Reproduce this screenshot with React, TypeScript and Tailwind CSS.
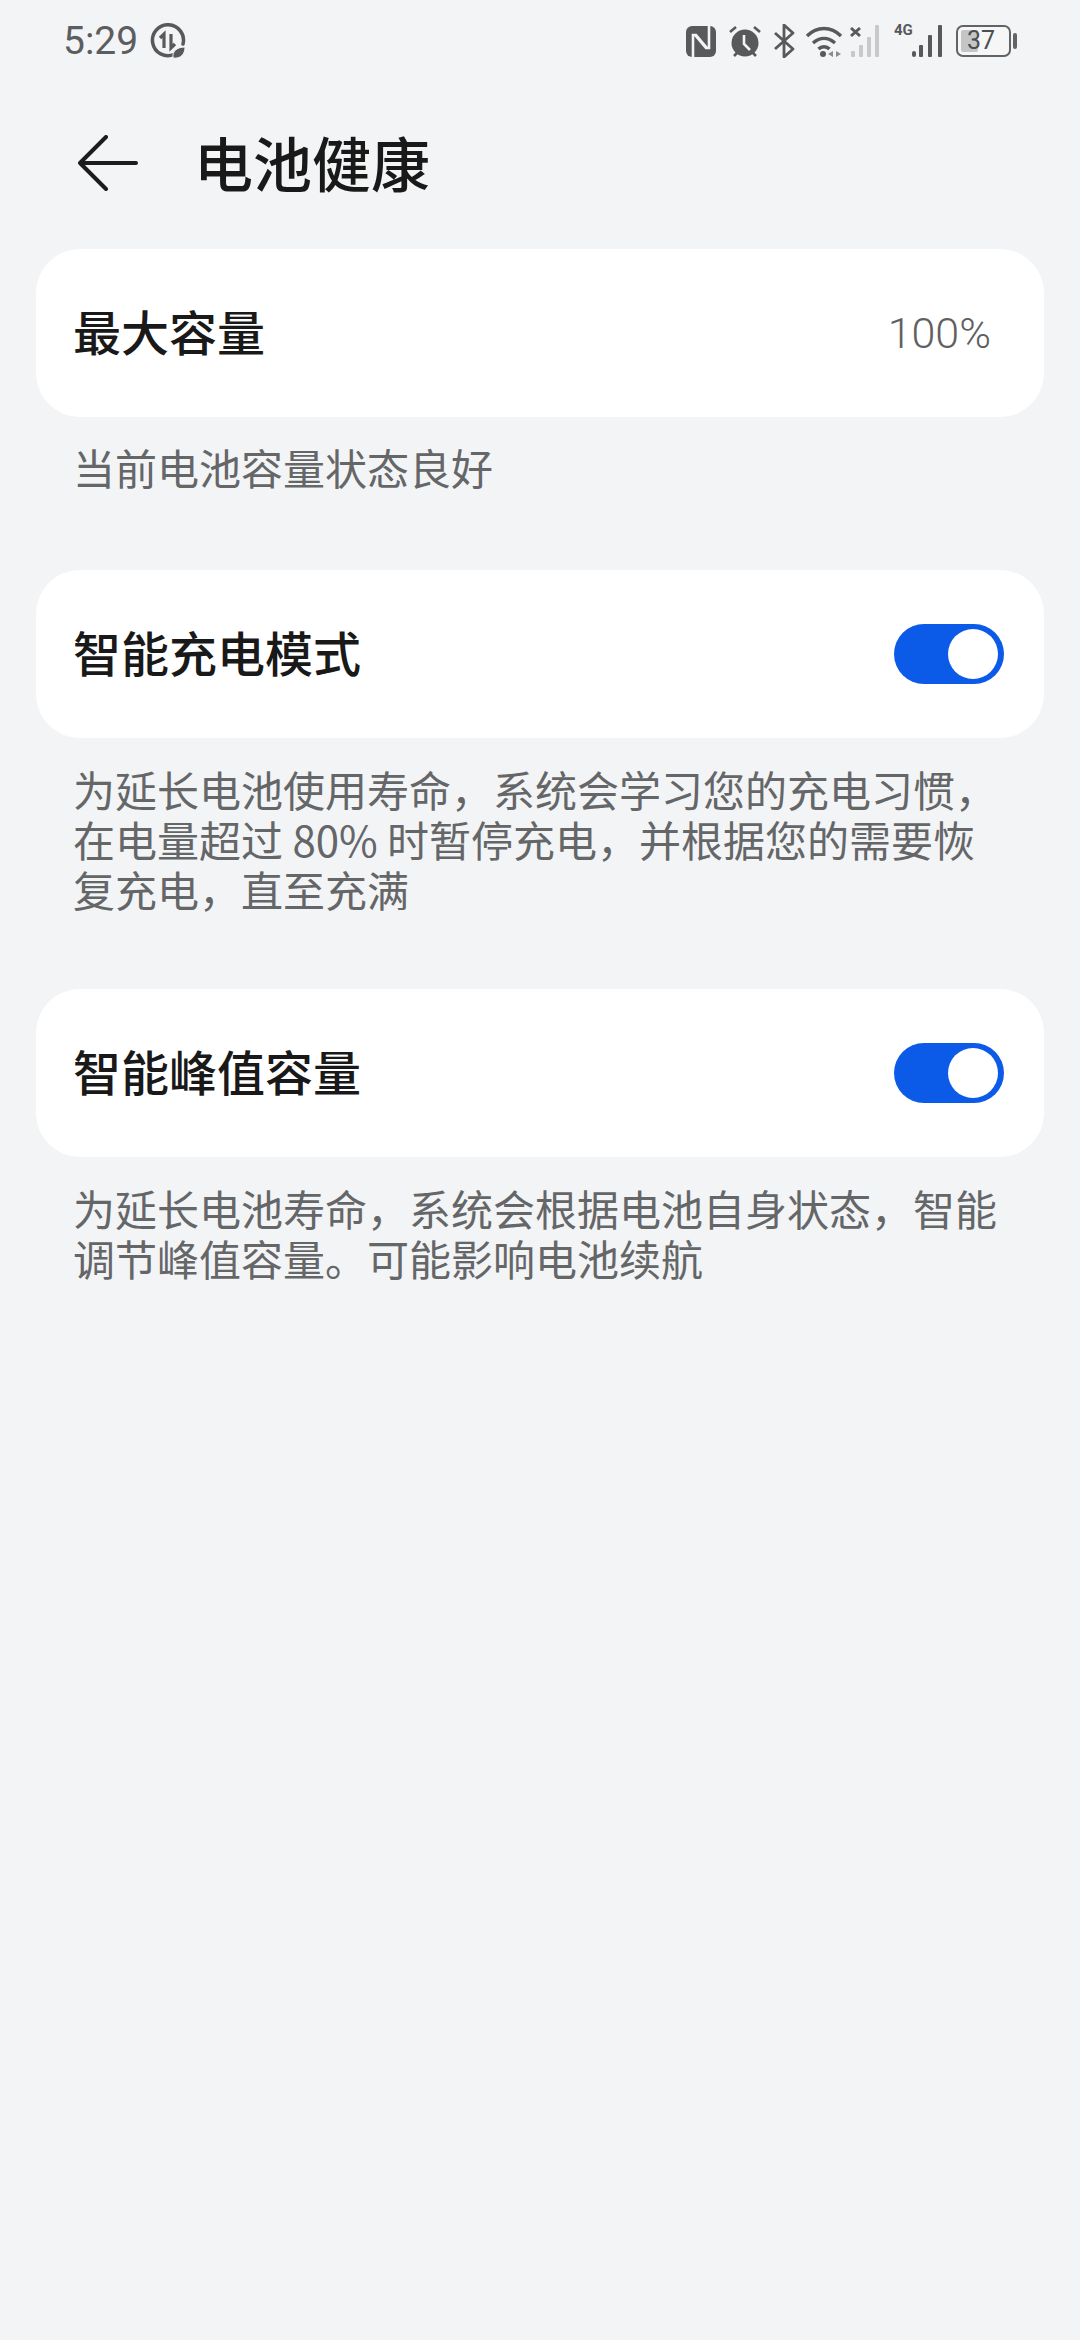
import React from "react";

function Toggle() {
  return (
    <div className="flex h-[60px] w-[110px] items-center justify-end rounded-full bg-[#0c5ae8] pr-[6px]">
      <div className="h-[50px] w-[50px] rounded-full bg-white" />
    </div>
  );
}

function Card({ title, children }: { title: string; children: React.ReactNode }) {
  return (
    <div className="mx-[36px] flex h-[168px] items-center justify-between rounded-[44px] bg-white pl-[37px] pr-[40px]">
      <span className="pb-[7px] text-[48px] font-medium leading-none text-[#191919]">{title}</span>
      {children}
    </div>
  );
}

function Caption({ lines, className }: { lines: string[]; className: string }) {
  return (
    <div className={"ml-[73px] text-[42px] leading-[50px] whitespace-nowrap text-[#646668] " + className}>
      {lines.map((l) => (
        <div key={l}>{l}</div>
      ))}
    </div>
  );
}

function StatusBar() {
  const c = "#58595b";
  return (
    <div className="flex h-[80px] items-center justify-between pl-[63px] pr-[63px] pt-[2px]">
      <div className="flex items-center gap-[12px]">
        <span className="font-['Roboto',sans-serif] text-[39px] leading-none text-[#5c5d5f]">5:29</span>
        <svg width="36" height="36" viewBox="0 0 36 36" fill="none">
          <path d="M24 31.5A15.5 15.5 0 1 1 33 21" stroke={c} strokeWidth="3.5" strokeLinecap="round" />
          <path d="M14 25V11l-4 4M21 11v14l4-4" stroke={c} strokeWidth="3.2" fill="none" />
          <path d="M23 35c-1-6 3-11 12-11 0 7-4 12-12 11z" fill={c} stroke="#f3f4f6" strokeWidth="1" />
        </svg>
      </div>
      <div className="flex items-center">
        <svg width="30" height="31" viewBox="0 0 30 31" fill="none" className="mr-[12px]">
          <rect width="30" height="31" rx="6" fill={c} />
          <path d="M7 31V9h3l11 13M23 0v22h-3L9 9" stroke="#f3f4f6" strokeWidth="2.600" />
        </svg>
        <svg width="34" height="33" viewBox="0 0 34 33" fill="none" className="mr-[11px]">
          <circle cx="17" cy="18" r="13.500" fill={c} />
          <path d="M16 10v9l6 6" stroke="#f3f4f6" strokeWidth="2.6" />
          <path d="M2 7l6-5M32 7l-6-5M6 31l3-3M28 31l-3-3" stroke={c} strokeWidth="2.6" />
        </svg>
        <svg width="22" height="34" viewBox="0 0 22 34" fill="none" className="mr-[10px]">
          <path d="M2 9l18 16-9 8V1l9 8L2 25" stroke={c} strokeWidth="2.8" strokeLinejoin="round" />
        </svg>
        <svg width="38" height="32" viewBox="0 0 38 32" fill="none" className="mr-[7px]">
          <path d="M2 11c10-10 24-10 34 0M8 18c7-6 15-6 22 0M13.500 24c3-3 8-3 11 0" stroke={c} strokeWidth="3.4" />
          <circle cx="18" cy="29" r="3" fill={c} />
          <path d="M23 29l5-3v6zM36 29l-5-3v6z" fill="#8a8b8d" />
        </svg>
        <svg width="34" height="32" viewBox="0 0 34 32" className="mr-[10px]">
          <path d="M1 3l9 8M10 3l-9 8" stroke={c} strokeWidth="3" />
          <g fill="#c8c9cb">
            <rect x="1" y="26" width="4" height="6" rx="1" />
            <rect x="9" y="20" width="4" height="12" rx="1" />
            <rect x="17" y="12" width="4" height="20" rx="1" />
            <rect x="25" y="0" width="4" height="32" rx="1" />
          </g>
        </svg>
        <div className="relative mr-[12px] h-[32px] w-[50px]">
          <span className="absolute left-0 top-[-3px] font-['Roboto',sans-serif] text-[15px] font-bold leading-[16px] text-[#58595b]">4G</span>
          <svg width="50" height="32" viewBox="0 0 50 32" className="absolute inset-0">
            <g fill={c}>
              <rect x="18" y="26" width="4" height="6" rx="2" />
              <rect x="25" y="20" width="4" height="12" rx="1" />
              <rect x="34" y="10" width="4" height="22" rx="1" />
              <rect x="44" y="0" width="4" height="32" rx="1" />
            </g>
          </svg>
        </div>
        <div className="relative flex h-[32px] w-[55px] items-center rounded-[7px] border-[2.500px] border-[#626365] bg-[#f6f6f7]">
          <div className="ml-[3px] h-[22px] w-[17px] rounded-[2px] bg-[#c4c5c7]" />
          <span className="absolute left-[9px] top-0 font-['Roboto',sans-serif] text-[25px] leading-[27px] text-[#4d4e50]">37</span>
        </div>
        <div className="ml-[2px] h-[16px] w-[4px] rounded-full bg-[#626365]" />
      </div>
    </div>
  );
}

export default function App() {
  return (
    <div className="h-[2340px] w-[1080px] overflow-hidden bg-[#f3f4f6] font-['Noto_Sans_CJK_SC','Noto_Sans',sans-serif]">
      <StatusBar />
      <div className="flex h-[169px] items-center pb-[7px] pl-[78px]">
        <svg width="60" height="56" viewBox="0 0 60 56" fill="none" className="mr-[56px] mt-[3px]">
          <path d="M28 2L2 28l26 26M2 28h56" stroke="#1c1c1c" strokeWidth="4" strokeLinecap="round" strokeLinejoin="round" />
        </svg>
        <span className="text-[59px] font-medium leading-none text-[#191919]">电池健康</span>
      </div>
      <Card title="最大容量">
        <span className="pr-[13px] font-['Roboto',sans-serif] text-[43px] font-light leading-none text-[#5f6062]">100%</span>
      </Card>
      <Caption className="mt-[25px] mb-[78px]" lines={["当前电池容量状态良好"]} />
      <Card title="智能充电模式">
        <Toggle />
      </Card>
      <Caption
        className="mt-[26px] mb-[75px]"
        lines={[
          "为延长电池使用寿命，系统会学习您的充电习惯，",
          "在电量超过 80% 时暂停充电，并根据您的需要恢",
          "复充电，直至充满",
        ]}
      />
      <Card title="智能峰值容量">
        <Toggle />
      </Card>
      <Caption
        className="mt-[26px]"
        lines={["为延长电池寿命，系统会根据电池自身状态，智能", "调节峰值容量。可能影响电池续航"]}
      />
    </div>
  );
}
